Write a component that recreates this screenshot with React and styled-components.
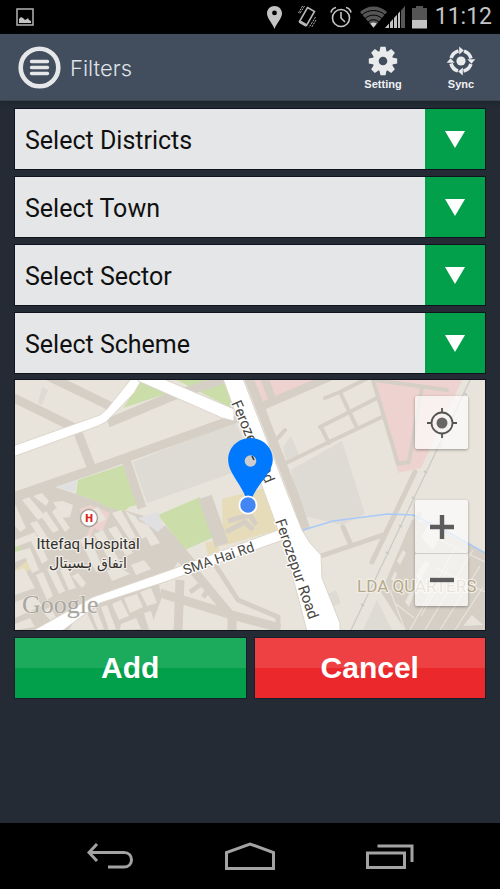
import React from "react";
import styled, { createGlobalStyle } from "styled-components";

const GlobalStyle = createGlobalStyle`
  *, *::before, *::after { box-sizing: border-box; }
  body { margin: 0; background: #242b35; font-family: Roboto, "Noto Sans", sans-serif; }
  button { font: inherit; border: 0; padding: 0; cursor: pointer; }
  svg { display: block; }
`;

const Screen = styled.div`
  min-height: 100vh;
  display: flex;
  flex-direction: column;
  background: #242b35;
`;

const StatusBar = styled.div`
  height: 34px;
  padding: 0 8px 0 16px;
  display: flex;
  align-items: center;
  justify-content: space-between;
  background: #000;
`;

const StatusIcons = styled.div`
  display: flex;
  align-items: center;
`;

const StatusIcon = styled.svg`
  margin-right: ${(p) => p.$gap}px;
  flex: none;
`;

const Clock = styled.time`
  color: #c4c4c4;
  font-size: 23px;
  line-height: 34px;
`;

const Header = styled.header`
  height: 67px;
  padding: 0 0 0 18px;
  display: flex;
  align-items: center;
  background: #424d5d;
  border-bottom: 1px solid #38434f;
  box-shadow: 0 1px 4px rgba(20, 32, 38, 0.7);
`;

const MenuButton = styled.button`
  background: none;
  margin-right: 9px;
`;

const Title = styled.h1`
  margin: 2px 0 0;
  flex: 1;
  color: #dfe2e6;
  font-family: Inter, Roboto, sans-serif;
  font-size: 22px;
  font-weight: 300;
  line-height: 32px;
`;

const HeaderAction = styled.button`
  width: 78px;
  margin-top: 2px;
  display: flex;
  flex-direction: column;
  align-items: center;
  gap: 1px;
  background: none;
  color: #f0f1f3;
  && {
    font-family: "Liberation Sans", Arial, sans-serif;
    font-size: 11px;
    font-weight: 700;
    line-height: 14px;
  }
`;

const Content = styled.main`
  flex: 1;
  padding: 8px 15px;
`;

const FieldList = styled.div`
  display: grid;
  gap: 8px;
  margin-bottom: 7px;
`;

const Field = styled.div`
  display: grid;
  grid-template-columns: 1fr 60px;
  height: 60px;
  box-shadow: 0 0 0 1px #10141f;
`;

const FieldSelect = styled.select`
  grid-area: 1 / 1 / 2 / 3;
  width: 100%;
  padding: 2px 70px 0 10px;
  appearance: none;
  border: 0;
  border-radius: 0;
  background: #e5e6e8;
  color: #101010;
  font-family: Roboto, sans-serif;
  font-size: 25px;
`;

const FieldArrow = styled.span`
  grid-area: 1 / 2;
  z-index: 1;
  display: grid;
  place-items: center;
  background: #02a04b;
  pointer-events: none;
`;

const MapPanel = styled.section`
  position: relative;
  height: 250px;
  margin-bottom: 8px;
  overflow: hidden;
  background: #e8e4dc;
  box-shadow: 0 0 0 1px #10141f;
`;

const MapDrawing = styled.svg`
  width: 100%;
  height: 100%;
`;

const MapControls = styled.div`
  position: absolute;
  right: 17px;
  ${(p) => (p.$place === "top" ? "top: 16px;" : "bottom: 24px;")}
  border-radius: 2px;
  box-shadow: 0 1px 3px rgba(0, 0, 0, 0.35);
`;

const MapButton = styled.button`
  width: 53px;
  height: 53px;
  display: grid;
  place-items: center;
  border-radius: 2px;
  background: rgba(255, 255, 255, 0.68);

  & + & {
    border-top: 1px solid #cfcdca;
  }
`;

const Actions = styled.div`
  display: grid;
  grid-template-columns: 1fr 1fr;
  gap: 9px;
`;

const ActionButton = styled.button`
  height: 60px;
  background: linear-gradient(${(p) => p.$top} 50%, ${(p) => p.$bottom} 50%);
  box-shadow: 0 0 0 1px #17202a;
  color: #fff;
  && {
    font-family: "Liberation Sans", Arial, sans-serif;
    font-size: 30px;
    font-weight: 700;
    line-height: 60px;
  }
`;

const NavBar = styled.nav`
  height: 66px;
  padding: 0 55px;
  display: flex;
  align-items: center;
  justify-content: space-between;
  background: #000;
`;

const NavButton = styled.button`
  width: 110px;
  height: 66px;
  display: grid;
  place-items: center;
  background: none;
`;

const fields = [
  { id: "districts", label: "Select Districts" },
  { id: "town", label: "Select Town" },
  { id: "sector", label: "Select Sector" },
  { id: "scheme", label: "Select Scheme" },
];

function StatusGlyphs() {
  return (
    <>
      <StatusIcon $gap={15} width="15" height="23" viewBox="0 0 15 23">
        <path fill="#c4c4c4" fillRule="evenodd" d="M7.500 0C3.300 0 0 3.200 0 7.300 0 12.500 5.300 17 7.500 23 9.700 17 15 12.500 15 7.300 15 3.200 11.700 0 7.500 0zm0 4.500a2.400 2.400 0 1 1 0 4.800 2.400 2.400 0 0 1 0-4.800z" />
      </StatusIcon>
      <StatusIcon $gap={13} width="20" height="24" viewBox="0 0 20 24" fill="none" stroke="#b8b8b8">
        <path strokeWidth="1.600" d="M10.500 2.500 17.500 6.500 9.500 20.500 2.500 16.500z" />
        <path strokeWidth="3" d="m2.500 16.500 7 4" />
        <path strokeWidth="1" strokeDasharray="2 1" d="M7.500 1 2.500 9M5.500 1 1.500 8M18.500 12 12 22.500M19 15 14.500 22.500" />
      </StatusIcon>
      <StatusIcon $gap={8} width="22" height="22" viewBox="0 0 22 22" fill="none" stroke="#c4c4c4" strokeWidth="1.600">
        <circle cx="11" cy="12" r="8.500" />
        <path d="M11 6v6l4 4M1 6.500C1.500 4 3.500 2 6 1.500M21 6.500C20.500 4 18.500 2 16 1.500" />
      </StatusIcon>
      <StatusIcon $gap={7} width="45" height="23" viewBox="0 0 45 23">
        <path fill="#555" d="M0 6C7-1.500 20-1.500 27 6L13.500 22z" />
        <path fill="none" stroke="#000" strokeWidth="1" d="M2 9C8 3 19 3 25 9M5 12.500c5-4.500 12-4.500 17 0M8 16c3-3 8-3 11 0" />
        <path fill="#d0d0d0" d="M10.300 17.500c2-1.500 4.400-1.500 6.400 0L13.500 21.500z" />
        <path fill="#555" d="M45 0v22H25z" />
        <path fill="#c4c4c4" d="M40 5.500V22H25z" />
        <path stroke="#000" strokeWidth="1" d="M29.500 15v8M33.500 10v13M37.500 6v17M40.500 4v19" />
      </StatusIcon>
      <StatusIcon $gap={8} width="15" height="23" viewBox="0 0 15 23">
        <path fill="#555" d="M4 0h7v2h4v12H0V2h4z" />
        <path fill="#c4c4c4" d="M0 14h15v8.500H0z" />
      </StatusIcon>
    </>
  );
}

function MenuIcon() {
  return (
    <svg width="43" height="43" viewBox="0 0 43 43" fill="none" stroke="#e5e7e9">
      <circle cx="21.500" cy="21.500" r="18.800" strokeWidth="4.600" />
      <path d="M13.500 15.500h16M13.500 21.500h16M13.500 27.500h16" strokeWidth="3.400" strokeLinecap="round" />
    </svg>
  );
}

function GearIcon() {
  return (
    <svg width="30" height="30" viewBox="-15 -15 30 30">
      <g fill="#e8eaec">
        {[0, 45, 90, 135, 180, 225, 270, 315].map((angle) => (
          <path key={angle} transform={`rotate(${angle})`} d="M-3.600-9-2.600-14.200h5.200L3.600-9z" />
        ))}
      </g>
      <circle r="7.300" fill="none" stroke="#e8eaec" strokeWidth="6" />
    </svg>
  );
}

function SyncIcon() {
  return (
    <svg width="30" height="30" viewBox="-15 -15 30 30">
      <circle r="4.600" fill="#e8eaec" />
      {[0, 90, 180, 270].map((angle) => (
        <g key={angle} transform={`rotate(${angle})`}>
          <path d="M3-9.900A10.300 10.300 0 0 1 10-2.500" fill="none" stroke="#e8eaec" strokeWidth="3.600" />
          <path d="M6.400-1.800h8L10.400 2.800z" fill="#e8eaec" />
        </g>
      ))}
    </svg>
  );
}

const leftBlocks = [
  "22,500 29,497 45,516 38,520", "33,496 42,493 49,501 46,506", "15,504 26,528 20,532 15,526",
  "53,502 63,501 73,505 70,517 62,518", "46,511 59,530 53,533 41,516", "56,508 70,528 65,532 52,512",
  "30,523 37,521 52,545 46,549", "15,540 35,532 48,560 42,564 31,541 15,547",
  "15,552 30,548 39,570 32,573 26,558 15,562", "15,571 24,568 35,588 15,595",
  "36,575 43,572 53,596 47,600", "47,569 54,567 65,591 59,594", "60,570 67,568 76,588 69,590",
  "72,576 78,573 86,583 82,588", "15,602 35,595 42,606 15,618", "15,624 30,618 35,627 15,630",
  "42,611 50,607 56,617 50,620", "91,510 98,507 106,519 99,523", "112,513 121,510 136,537 130,540",
  "125,511 135,516 149,535 142,539", "138,521 148,525 160,543 151,546", "108,529 116,526 133,553 126,556",
  "94,534 103,530 119,560 111,563", "80,540 89,535 103,569 96,572", "107,571 118,566 130,574 112,581",
  "131,565 144,560 151,569 136,575", "75,619 87,613 95,630 69,630", "90,610 96,608 104,629 98,630",
  "101,607 107,605 116,629 109,630", "112,604 121,600 129,616 119,620", "124,598 137,594 143,607 130,613",
  "140,592 151,588 157,603 147,606", "121,624 136,618 141,629 120,630", "144,613 151,611 156,629 149,630",
  "159,584 167,582 167,600 162,603",
];

const quarterBlocks = [
  "397,561 403,550 406,553 400,565", "391,579 395,571 397,574 394,582", "416,575 425,561 430,563 420,581",
  "405,602 411,590 414,594 409,607", "421,537 429,524 443,531 433,550", "463,626 472,615 483,625",
];

function MapScene() {
  return (
    <MapDrawing viewBox="15 380 470 250" preserveAspectRatio="xMidYMid slice" role="img" aria-label="Map">
      <rect x="-500" y="300" width="1500" height="420" fill="#e8e4dc" />
      <g fill="#dedad4">
        <path d="M133 462 235 422 255 465 147 503z" />
        <path d="M291 470 342 441 365 514 342 525 300 515z" />
        <path d="M363 630 377 600 392 630z" />
        <path d="M38 403 42 387 48 390 42 405z" />
        <path d="M328 594 336 590 341 603 332 607z" />
        <path d="M283 447 291 436 300 457 287 464z" />
      </g>
      <path fill="#cbdeaa" d="M142 380 172 392 123 408zM177 380h48l8 29zM78 480 123 465 138 505 120 509 76 494zM158 515 200 497 214 537 185 550zM15 538 23 553 15 557z" />
      <path fill="#edd2cf" d="M245 380h83l-66 25zM375 380h87l-41 88-23 5z" />
      <path fill="#d5cfc6" d="M15 493 52 486 76 494 120 509 158 520 185 550 170 575 150 630H15zM412 520 430 523 485 552V630H405L381 592z" />
      <path fill="#edd2cf" d="M80 509 90 505 110 513 102 532 94 528 90 539 86 538 91 525 83 526z" />
      <path fill="#e7dcb9" d="M15 570 28 560 31 569 17 578zM222 499 265 488 277 530 223 546zM205 543 218 540 219 551 208 555z" />
      <path fill="#cbdeaa" d="M101 500h20l8 8-7 4-22-8zM15 538 22 552 15 556z" />
      <g fill="#e8e4dc">
        {leftBlocks.map((points) => <polygon key={points} points={points} />)}
        {quarterBlocks.map((points) => <polygon key={points} points={points} />)}
        <path d="M213 492 255 478 258 485 216 501z" />
      </g>
      <path fill="#e0e0e2" d="M138 518 158 512 168 539zM58 487 78 480 74 492z" />
      <g fill="none" stroke="#d5cfc6" strokeLinejoin="round">
        <path strokeWidth="9" d="M10 396 77 429M48 376 114 408M108 423 170 397 230 377M10 498 100 467 240 417M77 430 92 469M126 460 142 508M248 376 296 500 306 530" />
        <path strokeWidth="8" d="M258 408 332 376M264 377 273 402" />
        <path strokeWidth="14" d="M205 497 222 545M160 530 190 565" />
        <path strokeWidth="9" d="M160 593 232 615 280 628M180 580 178 632M193 570 232 617M232 615V632" />
        <path strokeWidth="5" d="M214 563 238 600 278 617V632M226 532 245 522 253 530M228 521 250 515 256 525M190 592 200 585M203 597 209 589" />
        <path strokeWidth="4" strokeLinecap="round" d="M325 398 340 392 370 377M340 392 357 428M260 458 285 430M282 465 327 443 382 417M320 427 377 398M321 427 329 443" />
        <path strokeWidth="4" strokeLinecap="round" d="M373 380 398 464 409 462 422 387M375 380 447 390" />
        <path strokeWidth="5" strokeLinecap="round" d="M372 562 415 472M312 559 383 535M343 527 350 543M405 545 419 514" />
      </g>
      <path fill="none" stroke="#e8e4dc" strokeWidth="1.200" d="M410 630 455 548M425 630 473 550M440 630 480 566M455 630 483 587M421 616 448 568M436 568 485 592M440 540 485 562M390 590 405 630M396 604 414 618" />
      <g fill="none" stroke="#cbc9c5" strokeWidth="1.200">
        <path d="M351 630 413 500 471 378" />
        <path strokeWidth="2" d="m361 604 3 2m22-54 3 2m10-29 3 2m10-30 3 2m9-28 3 2m12-28 3 2m22-54 3 2" />
      </g>
      <path fill="none" stroke="#a9c9f8" strokeWidth="1.500" d="M300 531 333 521 388 514 413 515 450 533 485 553" />
      <g fill="#fff" stroke="#dcd5ca" strokeWidth="1">
        <path d="M10 447 100 415 107 409 131 379H142L134 393 106 422 98 426 10 458z" />
        <path d="M138 368 234 409V421L222 418 138 381z" />
        <path d="M222 376 242 376 290 500 302 530 310 543 321 555 322 578 340 623V635H308L293 578 283 540 165 582 100 603 58 634 27 634 93 597 170 570 278 530z" />
      </g>

      <g fontFamily="Roboto, sans-serif" fontSize="15" fill="#4a4743" stroke="#fff" strokeWidth="2.500" strokeLinejoin="round" paintOrder="stroke">
        <text transform="translate(231 403) rotate(67)">Ferozepur Rd</text>
        <text transform="translate(275 521) rotate(71)">Ferozepur Road</text>
        <text transform="translate(185 575) rotate(-19)" fontSize="14">SMA Hai Rd</text>
        <g stroke="#f0ede7" textAnchor="middle" fill="#33302d">
          <text x="88" y="549">Ittefaq Hospital</text>
          <text x="88" y="568" fontSize="14" fontFamily="DejaVu Sans, sans-serif" direction="rtl">اتفاق ہسپتال</text>
        </g>
        <text x="357" y="592" fontSize="17" fill="#b6a98a" stroke="#f0ede7">LDA QUARTERS</text>
      </g>
      <text x="22" y="613" fontFamily="Liberation Serif, serif" fontSize="26" fill="#aaa6a0" stroke="#f0ede7" strokeWidth="1" paintOrder="stroke">Google</text>

      <circle cx="89" cy="518" r="8.500" fill="#fff" stroke="#a9a29c" strokeWidth="1.500" />
      <text x="89" y="522" textAnchor="middle" fontFamily="Roboto, sans-serif" fontSize="11" fontWeight="900" fill="#e0241c">H</text>

      <path fill="#0179ff" d="M250.500 438c-12.500 0-22.300 9.600-22.300 21.800 0 13.200 12 22.200 18.800 40.200h4c6.800-17 21.800-27 21.800-40.200 0-12.200-9.800-21.800-22.300-21.800z" />
      <circle cx="250.500" cy="461" r="5.800" fill="#cdcdcd" />
      <path d="m252 456 2 4" stroke="#333" strokeWidth="1.500" />
      <circle cx="248" cy="505" r="8.600" fill="#4285f4" stroke="#fff" strokeWidth="1.800" />
    </MapDrawing>
  );
}

export default function App() {
  return (
    <Screen>
      <GlobalStyle />
      <StatusBar>
        <svg width="18" height="18" viewBox="0 0 18 18">
          <rect x="1" y="1" width="16" height="16" fill="none" stroke="#b4b4b4" strokeWidth="1.500" />
          <path fill="#c4c4c4" d="M3 15v-4l2-2 2 1 2 2 2-1 1-1 1 2 2 1v2z" />
        </svg>
        <StatusIcons>
          <StatusGlyphs />
          <Clock>11:12</Clock>
        </StatusIcons>
      </StatusBar>

      <Header>
        <MenuButton type="button" aria-label="Menu"><MenuIcon /></MenuButton>
        <Title>Filters</Title>
        <HeaderAction type="button"><GearIcon />Setting</HeaderAction>
        <HeaderAction type="button"><SyncIcon />Sync</HeaderAction>
      </Header>

      <Content>
        <FieldList>
          {fields.map(({ id, label }) => (
            <Field key={id}>
              <FieldSelect id={id} aria-label={label} defaultValue="">
                <option value="">{label}</option>
              </FieldSelect>
              <FieldArrow>
                <svg width="20" height="17" viewBox="0 0 20 17"><path fill="#fff" d="M0 0h20L10 17z" /></svg>
              </FieldArrow>
            </Field>
          ))}
        </FieldList>

        <MapPanel>
          <MapScene />
          <MapControls $place="top">
            <MapButton type="button" aria-label="My location">
              <svg width="30" height="30" viewBox="0 0 30 30" fill="none" stroke="#555" strokeWidth="1.800">
                <circle cx="15" cy="15" r="10.500" />
                <circle cx="15" cy="15" r="5.500" fill="#666" stroke="none" />
                <path d="M15 0v5M15 25v5M0 15h5M25 15h5" />
              </svg>
            </MapButton>
          </MapControls>
          <MapControls $place="bottom">
            <MapButton type="button" aria-label="Zoom in">
              <svg width="24" height="24" viewBox="0 0 24 24"><path d="M12 0v24M0 12h24" stroke="#5c5c5c" strokeWidth="4.400" /></svg>
            </MapButton>
            <MapButton type="button" aria-label="Zoom out">
              <svg width="24" height="24" viewBox="0 0 24 24"><path d="M0 12h24" stroke="#5c5c5c" strokeWidth="4.400" /></svg>
            </MapButton>
          </MapControls>
        </MapPanel>

        <Actions>
          <ActionButton type="button" $top="#1cab5d" $bottom="#02a04b">Add</ActionButton>
          <ActionButton type="button" $top="#ee4143" $bottom="#eb292c">Cancel</ActionButton>
        </Actions>
      </Content>

      <NavBar>
        <NavButton type="button" aria-label="Back">
          <svg width="46" height="26" viewBox="0 0 46 26" fill="none" stroke="#a3a3a3" strokeWidth="3">
            <path d="M10 1 2 9.500 10 18M2 9.500h35c10 0 10 14.500 0 14.500H21" />
          </svg>
        </NavButton>
        <NavButton type="button" aria-label="Home">
          <svg width="50" height="28" viewBox="0 0 50 28" fill="none" stroke="#a3a3a3" strokeWidth="3">
            <path d="M1.500 26.500V10.500L25 2l23.500 8.500v16z" />
          </svg>
        </NavButton>
        <NavButton type="button" aria-label="Recent apps">
          <svg width="48" height="25" viewBox="0 0 48 25" fill="none" stroke="#a3a3a3" strokeWidth="3">
            <path d="M1.500 9h37v14.500h-37zM11.500 2h34.500v16" />
          </svg>
        </NavButton>
      </NavBar>
    </Screen>
  );
}
